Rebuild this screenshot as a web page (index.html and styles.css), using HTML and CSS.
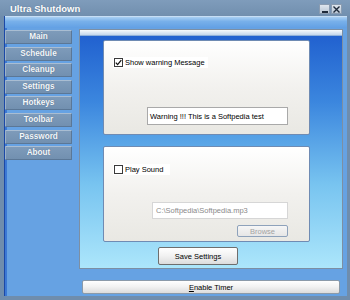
FILE: index.html
```html
<!DOCTYPE html>
<html lang="en">
<head>
    <meta charset="UTF-8">
    <link rel="stylesheet" href="styles.css">
</head>
<body>
    <div class="window">
        <!-- Title bar -->
        <div class="titlebar">
            <span class="title">Ultra Shutdown</span>
            <div class="caption-buttons">
                <span class="cap-btn"><span class="min-glyph"></span></span>
                <span class="cap-btn">
                    <svg width="7" height="7" viewBox="0 0 7 7"><path d="M0.5 0.5L6.5 6.5M6.5 0.5L0.5 6.5" stroke="#1e2a3a" stroke-width="1.4"/></svg>
                </span>
            </div>
        </div>

        <div class="client">
            <div class="band"></div>
            <div class="main">
                <!-- Left navigation -->
                <div class="nav">
                    <a class="nav-btn">Main</a>
                    <a class="nav-btn">Schedule</a>
                    <a class="nav-btn">Cleanup</a>
                    <a class="nav-btn">Settings</a>
                    <a class="nav-btn">Hotkeys</a>
                    <a class="nav-btn">Toolbar</a>
                    <a class="nav-btn">Password</a>
                    <a class="nav-btn">About</a>
                </div>

                <!-- Settings panel -->
                <div class="panel">
                    <div class="panel-head"></div>
                    <div class="box box-warning">
                        <label class="check-label warn-label">
                            <span class="check">
                                <svg width="7" height="7" viewBox="0 0 7 7"><path d="M0.8 3.6L2.6 5.6L6.3 1.2" fill="none" stroke="#111" stroke-width="1.3"/></svg>
                            </span>
                            Show warning Message
                        </label>
                        <div class="field field-warning">Warning !!! This is a Softpedia test</div>
                    </div>
                    <div class="box box-sound">
                        <label class="check-label sound-label">
                            <span class="check"></span>
                            Play Sound
                        </label>
                        <div class="field field-sound">C:\Softpedia\Softpedia.mp3</div>
                        <div class="btn btn-browse">Browse</div>
                    </div>
                    <div class="btn btn-save">Save Settings</div>
                </div>
            </div>
            <div class="footer">
                <div class="btn btn-timer"><u>E</u>nable Timer</div>
            </div>
        </div>
    </div>
</body>
</html>
```

FILE: styles.css
```css
* {
    box-sizing: border-box;
}

body {
    margin: 0;
    font-family: "Liberation Sans", Arial, sans-serif;
}

.window {
    width: 350px;
    height: 300px;
    background: #6f8dad;
    display: flex;
    flex-direction: column;
}

.titlebar {
    height: 16px;
    display: flex;
    align-items: center;
    justify-content: space-between;
    padding: 0 8px 0 10px;
    background: linear-gradient(#7f9cbb, #718fae);
}

.title {
    color: #ffffff;
    font-weight: bold;
    font-size: 9.5px;
    text-shadow: 0 0 1px #4a6480;
    margin-top: 1px;
}

.caption-buttons {
    display: flex;
    gap: 1px;
    margin-top: 2px;
}

.cap-btn {
    width: 11px;
    height: 10px;
    background: linear-gradient(#dfe6ee, #b9c6d4);
    border: 1px solid #8a9cb1;
    display: flex;
    align-items: center;
    justify-content: center;
}

.min-glyph {
    width: 6px;
    height: 2px;
    background: #1e2a3a;
    margin-top: 5px;
}

.client {
    flex: 1;
    margin: 0 3px 4px 4px;
    background: #66a2e3;
    border-left: 1px solid #1b48a6;
    box-shadow: inset 2px 0 0 #3b78d4;
    display: flex;
    flex-direction: column;
}

.band {
    height: 12px;
    background: linear-gradient(#a9d0f3, #78b0ea 40%, #62a0e4);
    border-top: 1px solid #c6def5;
}

.main {
    display: flex;
    padding-top: 1px;
    gap: 7px;
}

.nav {
    width: 67px;
    display: flex;
    flex-direction: column;
    gap: 2.6px;
    padding-top: 1px;
}

.nav-btn {
    height: 14px;
    background: linear-gradient(#7e9bba, #7290b0);
    border: 1px solid #5b7796;
    border-top-color: #a9bdd2;
    border-left-color: #9cb2c9;
    border-radius: 1px;
    color: #f4f7fa;
    font-weight: bold;
    font-size: 8.2px;
    text-align: center;
    line-height: 12px;
    text-shadow: 0 0 1px #4d6785;
}

.panel {
    width: 264px;
    height: 240px;
    border: 1px solid #7d8fa3;
    background: linear-gradient(#1f5ece, #3b86de 30%, #78c4f0 65%, #ace6fb);
    display: flex;
    flex-direction: column;
    align-items: flex-start;
}

.panel-head {
    width: 100%;
    height: 6px;
    background: linear-gradient(#f6f9fc, #c3d6ec);
    border-bottom: 1px solid #8fb0da;
}

.box {
    margin-left: 23px;
    width: 207px;
    background: linear-gradient(#ffffff, #f2f1ee 50%, #e9e8e3);
    border: 1px solid #6f8bb3;
    border-radius: 2px;
    font-size: 7.5px;
    color: #000000;
}

.box-warning {
    margin-top: 4px;
    height: 95px;
}

.box-sound {
    margin-top: 11px;
    height: 96px;
}

.check-label {
    display: flex;
    align-items: center;
    gap: 2px;
    height: 11px;
    margin-left: 9px;
    background: #ffffff;
}

.warn-label {
    width: 95px;
    margin-top: 16px;
}

.sound-label {
    width: 57px;
    margin-top: 17px;
}

.check {
    width: 9px;
    height: 9px;
    margin-left: 1px;
    border: 1px solid #3a3a3a;
    background: #ffffff;
    display: flex;
    align-items: center;
    justify-content: center;
}

.field {
    background: #ffffff;
    border: 1px solid #a9a9a9;
    padding-left: 2px;
    display: flex;
    align-items: center;
}

.field-warning {
    margin: 39px 0 0 43px;
    width: 141px;
    height: 18px;
}

.field-sound {
    margin: 27px 0 0 48px;
    width: 136px;
    height: 17px;
    color: #8a8a8a;
    border-color: #d6d6d6;
    padding-left: 3px;
}

.btn {
    display: flex;
    align-items: center;
    justify-content: center;
    font-size: 7.5px;
    border-radius: 2px;
    background: linear-gradient(#ffffff, #f1f1f1 50%, #dcdcdc);
}

.btn-browse {
    margin: 6px 0 0 133px;
    width: 51px;
    height: 12px;
    border: 1px solid #8ea2bb;
    color: #a3a3a3;
    background: linear-gradient(#f6f6f6, #e6e6e6);
}

.btn-save {
    margin: 5px 0 0 78px;
    width: 80px;
    height: 18px;
    border: 1px solid #6e6e6e;
    color: #000000;
}

.footer {
    padding: 11px 0 0 77px;
}

.btn-timer {
    width: 258px;
    height: 14px;
    border: 1px solid #8b9aa9;
    color: #000000;
}
```
